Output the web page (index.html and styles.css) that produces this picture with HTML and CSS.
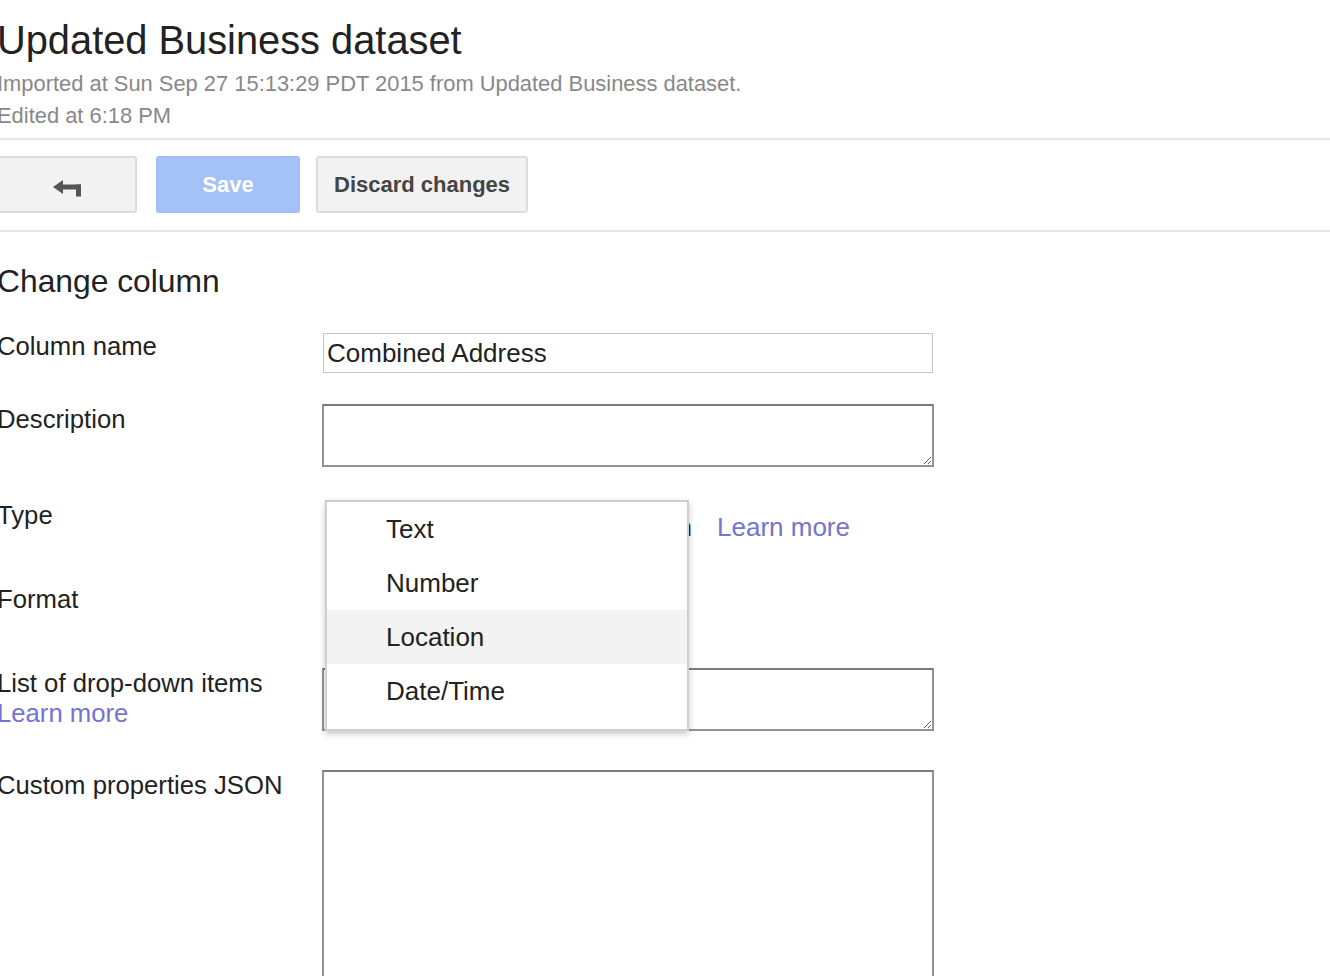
FILE: index.html
```html
<!DOCTYPE html>
<html lang="en">
<head>
<meta charset="utf-8">
<title>Change column</title>
<link rel="stylesheet" href="styles.css">
</head>
<body>
<div class="page">
  <h1 class="title">Updated Business dataset</h1>
  <div class="meta">Imported at Sun Sep 27 15:13:29 PDT 2015 from Updated Business dataset.<br>Edited at 6:18 PM</div>

  <div class="toolbar">
    <button class="btn btn-back" type="button" aria-label="Back">
      <svg class="back-icon" width="28" height="18" viewBox="0 0 28 18" aria-hidden="true">
        <polygon points="0,7 10,0 10,14" fill="#555"/>
        <rect x="9" y="4.5" width="19" height="5" fill="#555"/>
        <rect x="23" y="4.5" width="5" height="12" fill="#555"/>
      </svg>
    </button>
    <button class="btn btn-save" type="button">Save</button>
    <button class="btn btn-discard" type="button">Discard changes</button>
  </div>

  <h2 class="section-title">Change column</h2>

  <div class="form">
    <div class="row row-name">
      <div class="label">Column name</div>
      <input class="text-input" type="text" value="Combined Address">
    </div>

    <div class="row row-desc">
      <div class="label">Description</div>
      <textarea class="area area-short"></textarea>
    </div>

    <div class="row row-type">
      <div class="label">Type</div>
      <div class="type-field">
        <span class="type-value">Location</span>
        <a class="link learn" href="#">Learn more</a>
      </div>
      <ul class="menu">
        <li class="menu-item">Text</li>
        <li class="menu-item">Number</li>
        <li class="menu-item active">Location</li>
        <li class="menu-item">Date/Time</li>
      </ul>
    </div>

    <div class="row row-format">
      <div class="label">Format</div>
      <div class="format-field"></div>
    </div>

    <div class="row row-list">
      <div class="label">List of drop-down items<br><a class="link" href="#">Learn more</a></div>
      <textarea class="area area-short"></textarea>
    </div>

    <div class="row row-json">
      <div class="label">Custom properties JSON</div>
      <textarea class="area area-tall"></textarea>
    </div>
  </div>
</div>
</body>
</html>
```
FILE: styles.css
```css
html, body {
  margin: 0;
  background: #fff;
}

body {
  font-family: "Liberation Sans", Arial, Helvetica, sans-serif;
  color: #222;
  overflow: hidden;
}

.page {
  margin-left: -3px;
  padding-top: 16px;
}

.title {
  margin: 0;
  font-size: 39.8px;
  line-height: 48px;
  font-weight: normal;
  color: #222;
}

.meta {
  margin-top: 4px;
  font-size: 21.9px;
  line-height: 32px;
  color: #888;
}

.toolbar {
  margin-top: 6px;
  display: flex;
  align-items: flex-start;
  padding: 16px 0 17px;
  border-top: 2px solid #e6e6e6;
  border-bottom: 2px solid #e6e6e6;
}

.btn {
  height: 57px;
  box-sizing: border-box;
  margin: 0;
  border: 2px solid #dcdcdc;
  border-radius: 3px;
  background: #f2f2f2;
  font-family: "Liberation Sans", Arial, sans-serif;
  font-size: 22px;
  font-weight: bold;
  color: #444;
  padding: 0 16px;
  cursor: default;
}

.btn-back {
  width: 140px;
  display: flex;
  align-items: center;
  justify-content: center;
  padding: 8px 0 0;
}

.back-icon {
  display: block;
}

.btn-save {
  margin-left: 19px;
  width: 144px;
  background: #a4c2f7;
  border-color: #a0bef4;
  color: #fff;
}

.btn-discard {
  margin-left: 16px;
}

.section-title {
  margin: 30px 0 0;
  font-size: 31.8px;
  line-height: 38px;
  font-weight: normal;
  color: #222;
}

.form {
  margin-top: 31px;
}

.row {
  display: grid;
  grid-template-columns: 325px 612px;
  align-items: start;
  margin-bottom: 31px;
}

.label {
  font-size: 25.7px;
  line-height: 30px;
  color: #222;
}

.text-input {
  margin: 2px 0 0 1px;
  width: 610px;
  height: 40px;
  box-sizing: border-box;
  border: 1px solid #c4c4c4;
  border-radius: 0;
  padding: 0 0 0 3px;
  font-family: "Liberation Sans", Arial, sans-serif;
  font-size: 26px;
  color: #222;
  outline: none;
  background: #fff;
}

.area {
  display: block;
  box-sizing: border-box;
  width: 612px;
  margin: 0;
  padding: 2px;
  border: 2px solid #939393;
  border-top-color: #7b7b7b;
  border-radius: 0;
  font-family: "Liberation Sans", Arial, sans-serif;
  font-size: 26px;
  background: #fff;
  resize: both;
  outline: none;
}

.area-short {
  height: 63px;
}

.area-tall {
  height: 260px;
}

.row-desc {
  margin-bottom: 33px;
}

.row-type {
  position: relative;
  min-height: 53px;
}

.type-field {
  display: flex;
  margin-top: 12px;
  font-size: 26px;
  line-height: 30px;
  white-space: nowrap;
}

.type-value {
  width: 370px;
  text-align: right;
  color: #222;
}

.learn {
  margin-left: 25px;
}

.link {
  color: #7373d1;
  text-decoration: none;
}

.row-format {
  min-height: 53px;
}

.row-list {
  margin-bottom: 39px;
}

.menu {
  position: absolute;
  top: 0;
  left: 328px;
  z-index: 2;
  width: 364px;
  box-sizing: border-box;
  margin: 0;
  padding: 0 0 11px;
  list-style: none;
  background: #fff;
  border: 2px solid #cfcfcf;
  box-shadow: 0 3px 6px rgba(0, 0, 0, 0.22);
}

.menu-item {
  height: 54px;
  line-height: 54px;
  padding-left: 59px;
  font-size: 26px;
  color: #222;
}

.menu-item.active {
  background: #f3f3f3;
}
```
